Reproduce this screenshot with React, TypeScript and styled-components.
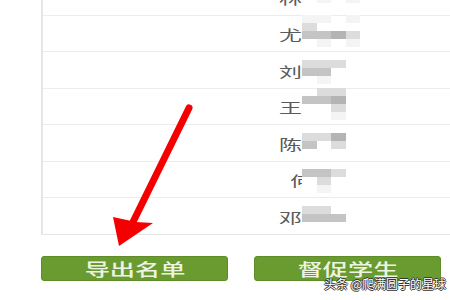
import React from 'react';
import styled, { createGlobalStyle } from 'styled-components';

const GlobalStyle = createGlobalStyle`
  html, body {
    margin: 0;
    padding: 0;
    background: #ffffff;
    overflow: hidden;
  }
  body {
    font-family: "Noto Sans CJK SC", "Liberation Sans", sans-serif;
  }
`;

const Page = styled.div`
  position: relative;
  width: 450px;
  height: 300px;
  overflow: hidden;
  background: #fff;
`;

const Table = styled.div`
  margin-left: 41px;
  margin-top: -21px;
  width: 430px;
  border-left: 2px solid #e6e6e6;
  border-bottom: 1px solid #e4e4e4;
`;

const Row = styled.div`
  height: 35.5px;
  border-bottom: 1px solid #ececec;
  display: flex;
  align-items: center;
  padding-left: 236px;
  &:last-child {
    border-bottom: none;
  }
`;

const NameCell = styled.div<{ $shift?: number }>`
  width: 23px;
  overflow: hidden;
  flex-shrink: 0;
  padding-left: ${({ $shift }) => $shift || 0}px;
  box-sizing: border-box;
  white-space: nowrap;
`;

const Name = styled.span`
  display: inline-block;
  font-size: 13.5px;
  color: #5a5a5a;
  transform: scaleX(1.7);
  transform-origin: left center;
`;

const Mosaic = styled.div`
  display: grid;
  grid-template-columns: repeat(4, 14.5px);
  grid-template-rows: repeat(4, 8px);
  margin-top: -4px;
`;

const Cell = styled.div<{ $c: string }>`
  background: ${({ $c }) => $c};
`;

const Buttons = styled.div`
  display: flex;
  gap: 26px;
  margin: 21px 0 0 41px;
`;

const Button = styled.button`
  width: 187px;
  height: 25px;
  border: 1px solid #5f8c29;
  border-radius: 3px;
  background: #6a9b30;
  display: flex;
  align-items: center;
  justify-content: center;
  padding: 0;
  cursor: pointer;
`;

const ButtonLabel = styled.span`
  display: inline-block;
  font-family: "Noto Sans CJK SC", sans-serif;
  font-size: 17px;
  font-weight: 500;
  line-height: 1;
  color: #eef4e2;
  transform: scaleX(1.48);
`;

const Watermark = styled.div`
  position: absolute;
  left: 324px;
  top: 277px;
  font-family: "Noto Sans CJK SC", sans-serif;
  font-size: 12px;
  line-height: 14px;
  color: #fff;
  white-space: nowrap;
  text-shadow: 1px 0 0 #333, -1px 0 0 #333, 0 1px 0 #333, 0 -1px 0 #333;
`;

const Arrow = styled.svg`
  position: absolute;
  left: 0;
  top: 0;
  pointer-events: none;
`;

const L = '#f4f4f4';
const M = '#dcdcdc';
const D = '#c4c4c4';
const X = '#b4b4b4';
const W = 'transparent';

const rows: { name: string; shift?: number; cells: string[] }[] = [
  { name: '林', cells: [W, W, W, W, W, D, D, W, W, L, W, L, W, W, W, W] },
  { name: '尤', cells: [L, L, W, L, M, W, W, W, D, D, X, M, W, L, W, L] },
  { name: '刘', cells: [W, W, W, W, M, M, M, W, D, D, W, W, W, L, W, W] },
  { name: '王', cells: [W, M, M, W, D, D, X, W, W, W, M, W, W, W, L, W] },
  { name: '陈', cells: [W, W, W, W, M, M, X, W, D, W, M, W, W, W, W, W] },
  { name: '何', shift: 11, cells: [W, W, W, W, D, D, M, W, W, M, W, W, W, L, W, W] },
  { name: '邓', cells: [W, W, W, W, M, M, W, W, D, D, D, W, W, W, W, W] },
];

export default function App() {
  return (
    <Page>
      <GlobalStyle />
      <Table>
        {rows.map((r) => (
          <Row key={r.name}>
            <NameCell $shift={r.shift}>
              <Name>{r.name}</Name>
            </NameCell>
            <Mosaic>
              {r.cells.map((c, i) => (
                <Cell key={i} $c={c} />
              ))}
            </Mosaic>
          </Row>
        ))}
      </Table>
      <Buttons>
        <Button>
          <ButtonLabel>导出名单</ButtonLabel>
        </Button>
        <Button>
          <ButtonLabel>督促学生</ButtonLabel>
        </Button>
      </Buttons>
      <Watermark>头条 @爬满圆子的星球</Watermark>
      <Arrow width="450" height="300" viewBox="0 0 450 300">
        <line x1="189" y1="108" x2="133" y2="222" stroke="#f50000" strokeWidth="7" strokeLinecap="round" />
        <polygon points="113,217 119,246 153,223 136,222" fill="#f50000" />
      </Arrow>
    </Page>
  );
}
